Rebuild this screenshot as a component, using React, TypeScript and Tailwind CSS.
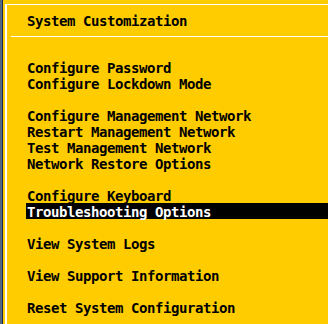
import React from "react";

const groups: string[][] = [
  ["Configure Password", "Configure Lockdown Mode"],
  [
    "Configure Management Network",
    "Restart Management Network",
    "Test Management Network",
    "Network Restore Options",
  ],
  ["Configure Keyboard", "Troubleshooting Options"],
  ["View System Logs"],
  ["View Support Information"],
  ["Reset System Configuration"],
];

const font = {
  fontFamily: '"DejaVu Sans Mono", "Liberation Mono", monospace',
};

export default function App() {
  return (
    <div
      className="w-[328px] h-[324px] flex bg-[#ffcc00] overflow-hidden text-black font-bold text-[14px] tracking-[-0.43px]"
      style={font}
    >
      <div className="w-px h-full bg-[#5c6470]" />
      <div className="w-px h-full bg-[#4a6a9a]" />
      <div className="w-px h-full bg-[#1c2a44]" />
      <div className="flex-1 pl-[2px] pt-[4px] h-full">
        <div className="h-full border-l-2 border-t border-white flex flex-col">
          <div className="pt-[7px] pl-[19px] h-[23px] whitespace-pre">
            <div className="h-4 leading-[19px] pl-px">System Customization</div>
          </div>
          <div className="mt-[8px] ml-[4px] h-px bg-white" />
          <div className="mt-[22px] flex flex-col gap-4">
            {groups.map((g, i) => (
              <div key={i} className="flex flex-col">
                {g.map((item) => {
                  const sel = item === "Troubleshooting Options";
                  return (
                    <div
                      key={item}
                      className={
                        sel
                          ? "ml-[19px] h-4 leading-[19px] pl-px bg-black text-white whitespace-pre overflow-visible"
                          : "ml-[19px] h-4 leading-[19px] pl-px whitespace-pre"
                      }
                    >
                      {item}
                    </div>
                  );
                })}
              </div>
            ))}
          </div>
        </div>
      </div>
    </div>
  );
}
